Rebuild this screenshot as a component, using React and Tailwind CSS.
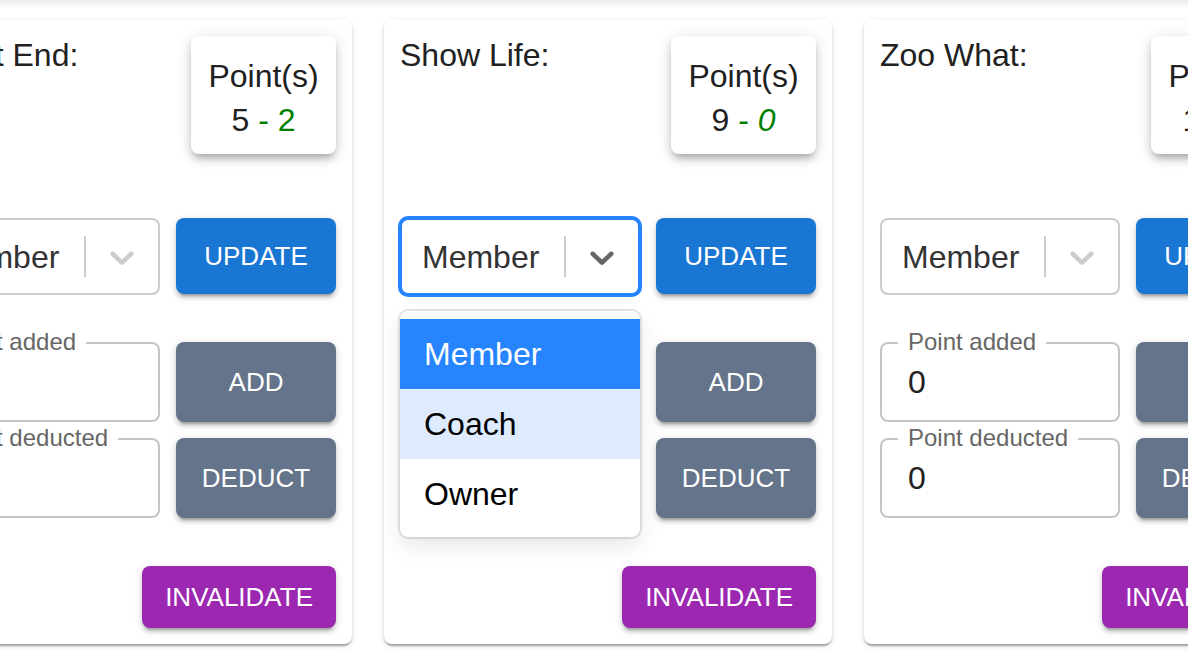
import { useState } from "react"

const teams = [
  { id: 1, title: "Sprint End:", plus: 5, minus: 2 },
  { id: 2, title: "Show Life:", plus: 9, minus: 0, open: true },
  { id: 3, title: "Zoo What:", plus: 12, minus: 1 },
]

const roles = ["Member", "Coach", "Owner"]

function Chevron({ color }) {
  return (
    <svg width="40" height="40" viewBox="0 0 20 20" fill={color}>
      <path d="M4.516 7.548c0.436-0.446 1.043-0.481 1.576 0l3.908 3.747 3.908-3.747c0.533-0.481 1.141-0.446 1.574 0 0.436 0.445 0.408 1.197 0 1.615-0.406 0.418-4.695 4.502-4.695 4.502-0.217 0.223-0.502 0.335-0.787 0.335s-0.57-0.112-0.789-0.335c0 0-4.287-4.084-4.695-4.502s-0.436-1.17 0-1.615z" />
    </svg>
  )
}

function RoleSelect({ open }) {
  const [role] = useState("Member")

  return (
    <div className="relative w-[240px] h-[77px] shrink-0">
      <div
        className={
          open
            ? "h-full flex items-center rounded-lg bg-white border-2 border-[#2684ff] shadow-[0_0_0_2px_#2684ff]"
            : "h-full flex items-center rounded-lg bg-white border-2 border-[#cccccc]"
        }
      >
        <div className="flex-1 pl-[20px] text-[32px] text-[#333333]">{role}</div>
        <div className="self-stretch my-4 w-[2px] bg-[#cccccc]" />
        <div className="px-4 flex items-center">
          <Chevron color={open ? "#666666" : "#cccccc"} />
        </div>
      </div>

      {open && (
        <div className="absolute left-0 top-[93px] w-[240px] z-10 bg-white rounded-lg py-2 shadow-[0_0_0_2px_rgba(0,0,0,0.1),0_8px_22px_rgba(0,0,0,0.1)]">
          {roles.map(r => (
            <div
              key={r}
              className={
                r === "Member"
                  ? "h-[70px] px-6 flex items-center text-[32px] bg-[#2684ff] text-white"
                  : r === "Coach"
                  ? "h-[70px] px-6 flex items-center text-[32px] bg-[#deebff] text-black"
                  : "h-[70px] px-6 flex items-center text-[32px] text-black"
              }
            >
              {r}
            </div>
          ))}
        </div>
      )}
    </div>
  )
}

function PointField({ label, hidden }) {
  return (
    <div className="relative w-[240px] h-[80px] shrink-0 rounded-lg border-2 border-[#c4c4c4] flex items-center px-[26px]">
      {/* under the open menu the labels are covered anyway */}
      {!hidden && (
        <span className="absolute left-[16px] -top-[14px] px-[10px] bg-white text-[24px] leading-[24px] text-[#666666]">
          {label}
        </span>
      )}
      {!hidden && <span className="text-[32px] text-[#212121]">0</span>}
    </div>
  )
}

function ActionButton({ children, color, height }) {
  return (
    <button
      className={`w-[160px] ${height} rounded-lg text-white text-[26px] uppercase ${color} shadow-[0_6px_2px_-4px_rgba(0,0,0,0.2),0_4px_4px_0_rgba(0,0,0,0.14),0_2px_10px_0_rgba(0,0,0,0.12)]`}
    >
      {children}
    </button>
  )
}

function TeamCard({ team }) {
  return (
    <div className="w-[448px] shrink-0 bg-white rounded-lg p-4 shadow-[0_4px_2px_-2px_rgba(0,0,0,0.2),0_2px_2px_0_rgba(0,0,0,0.14),0_2px_6px_0_rgba(0,0,0,0.12)]">
      <div className="flex justify-between items-start">
        <h2 className="pt-[1px] text-[32px] leading-[37px] text-[#212121]">{team.title}</h2>
        <div className="w-[145px] h-[118px] rounded-lg bg-white pt-[18px] text-center text-[32px] leading-[44px] text-[#212121] shadow-[0_6px_6px_-4px_rgba(0,0,0,0.2),0_6px_8px_0_rgba(0,0,0,0.14),0_2px_16px_0_rgba(0,0,0,0.12)]">
          <div>Point(s)</div>
          <div>
            {team.plus}
            <span className="text-[#008000]">
              {" - "}
              <span className={team.minus === 0 ? "italic" : ""}>{team.minus}</span>
            </span>
          </div>
        </div>
      </div>

      <div className="mt-[64px] flex gap-4 items-start">
        <RoleSelect open={team.open} />
        <ActionButton color="bg-[#1976d2]" height="h-[76px]">Update</ActionButton>
      </div>

      <div className="mt-[47px] flex gap-4">
        <PointField label="Point added" hidden={team.open} />
        <ActionButton color="bg-[#64748b]" height="h-[80px]">Add</ActionButton>
      </div>

      <div className="mt-4 flex gap-4">
        <PointField label="Point deducted" hidden={team.open} />
        <ActionButton color="bg-[#64748b]" height="h-[80px]">Deduct</ActionButton>
      </div>

      <div className="mt-[48px] flex justify-end">
        <button className="h-[62px] px-[23px] rounded-lg bg-[#9c27b0] text-white text-[26px] uppercase shadow-[0_6px_2px_-4px_rgba(0,0,0,0.2),0_4px_4px_0_rgba(0,0,0,0.14),0_2px_10px_0_rgba(0,0,0,0.12)]">
          Invalidate
        </button>
      </div>
    </div>
  )
}

function App() {
  return (
    <div
      className="w-[1188px] h-[666px] overflow-hidden bg-white"
      style={{ fontFamily: '"Liberation Sans", Arial, sans-serif' }}
    >
      <div className="h-[8px] bg-gradient-to-b from-[#ececec] to-white" />
      <div className="mt-[12px] -ml-[96px] flex gap-8">
        {teams.map(t => (
          <TeamCard key={t.id} team={t} />
        ))}
      </div>
    </div>
  )
}

export default App
